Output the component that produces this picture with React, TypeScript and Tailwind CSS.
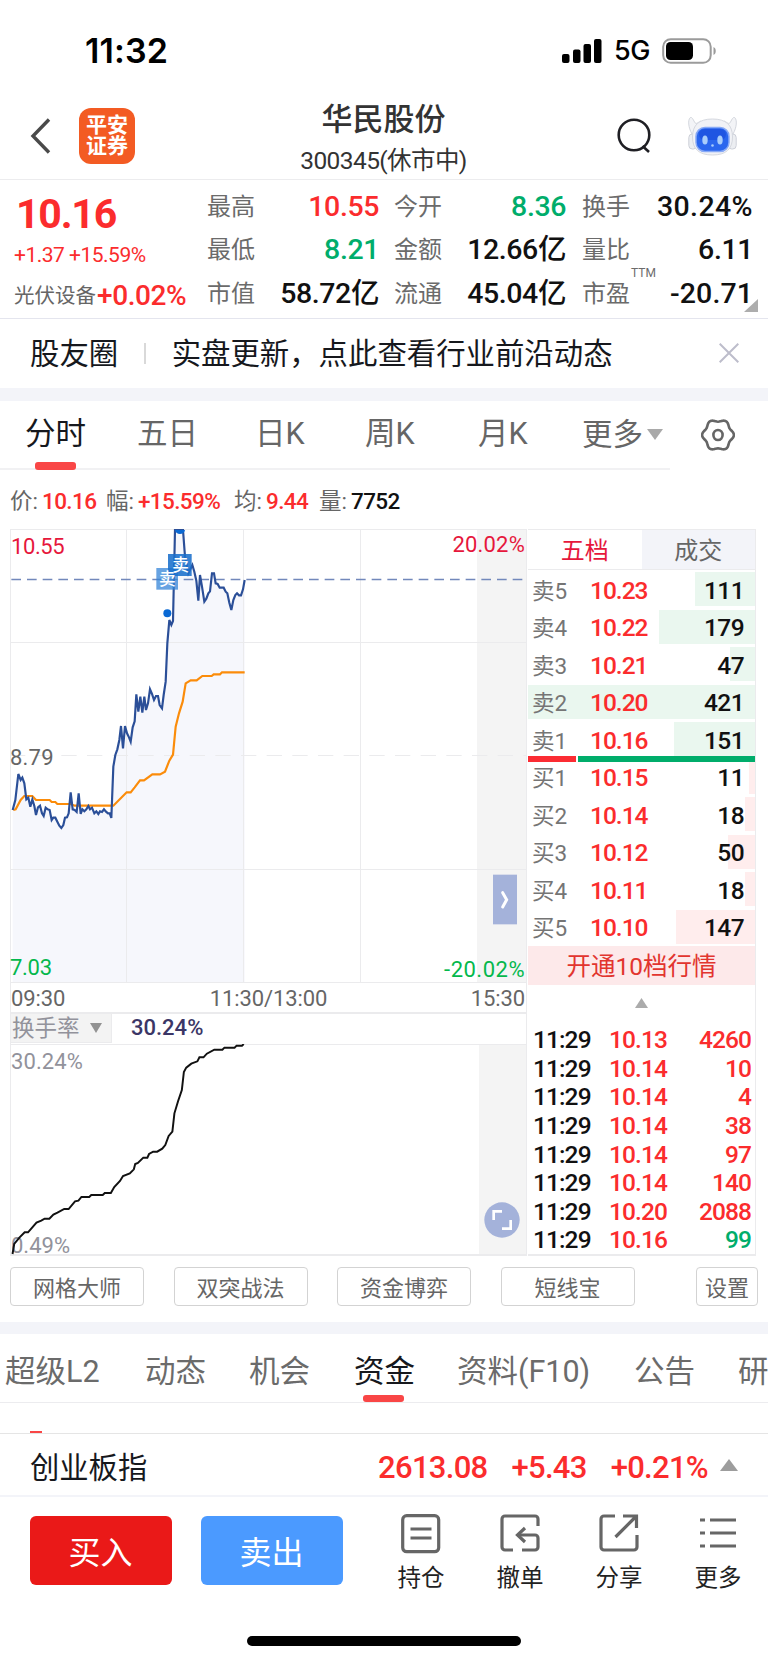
import React from 'react';
import clsx from 'clsx';

type Stat = { label: string; value: string; tone?: string; sup?: string; spacing?: string };
type Level = { label: string; price: string; volume: number };
type Tick = { time: string; price: string; volume: string; tone?: string };

const RED = 'text-[#fb2c2d]';
const GREEN = 'text-[#00ad6b]';

const STATS: Stat[][] = [
  [
    { label: '最高', value: '10.55', tone: RED },
    { label: '最低', value: '8.21', tone: GREEN },
    { label: '市值', value: '58.72亿' },
  ],
  [
    { label: '今开', value: '8.36', tone: GREEN },
    { label: '金额', value: '12.66亿' },
    { label: '流通', value: '45.04亿' },
  ],
  [
    { label: '换手', value: '30.24%', spacing: 'tracking-[0.4px]' },
    { label: '量比', value: '6.11' },
    { label: '市盈', value: '-20.71', sup: 'TTM', spacing: 'tracking-[0.1px]' },
  ],
];

const ASKS: Level[] = [
  { label: '卖5', price: '10.23', volume: 111 },
  { label: '卖4', price: '10.22', volume: 179 },
  { label: '卖3', price: '10.21', volume: 47 },
  { label: '卖2', price: '10.20', volume: 421 },
  { label: '卖1', price: '10.16', volume: 151 },
];

const BIDS: Level[] = [
  { label: '买1', price: '10.15', volume: 11 },
  { label: '买2', price: '10.14', volume: 18 },
  { label: '买3', price: '10.12', volume: 50 },
  { label: '买4', price: '10.11', volume: 18 },
  { label: '买5', price: '10.10', volume: 147 },
];

const MAX_VOLUME = 421;

const TICKS: Tick[] = [
  { time: '11:29', price: '10.13', volume: '4260' },
  { time: '11:29', price: '10.14', volume: '10' },
  { time: '11:29', price: '10.14', volume: '4' },
  { time: '11:29', price: '10.14', volume: '38' },
  { time: '11:29', price: '10.14', volume: '97' },
  { time: '11:29', price: '10.14', volume: '140' },
  { time: '11:29', price: '10.20', volume: '2088' },
  { time: '11:29', price: '10.16', volume: '99', tone: GREEN },
];

const PRICE_LINE =
  '38,870 46,840 55,762 62,780 67,773 73,790 79,838 85,833 91,860 97,838 103,858 108,885 114,862 120,857 126,880 131,888 137,863 143,868 149,870 155,900 160,893 166,893 172,905 178,917 184,924 190,915 195,893 201,892 206,880 212,817 218,868 224,870 230,876 236,820 242,882 247,868 253,874 259,868 265,858 270,868 276,863 283,880 289,874 295,882 300,874 306,876 312,868 318,875 324,880 329,880 334,894 340,740 346,705 352,688 358,660 363,618 369,685 375,618 381,640 387,652 392,665 398,622 404,604 409,523 415,575 421,530 427,578 433,530 438,570 444,550 450,508 456,522 462,540 468,528 474,528 479,555 486,565 491,525 497,485 502,370 508,300 514,315 519,303 525,30 549,30 555,110 565,160 577,135 583,155 589,182 595,242 600,165 606,200 613,245 619,236 625,220 630,214 636,160 642,160 647,190 653,192 659,203 671,203 677,215 682,220 688,248 694,270 700,240 706,225 711,220 717,226 723,226 729,208 734,180';

const AVERAGE_LINE =
  '40,870 47,868 62,840 73,828 97,828 108,840 149,840 155,846 166,846 172,852 212,852 224,857 340,857 380,817 392,817 404,802 420,781 432,781 457,763 480,763 495,755 508,722 519,704 527,620 537,580 548,545 557,490 572,481 590,481 607,468 635,468 641,463 660,463 666,457 734,457';

const TURNOVER_LINE =
  '37,672 42,642 58,622 73,607 83,607 108,578 122,572 132,566 146,566 158,554 170,548 190,537 203,537 222,514 232,512 241,501 264,501 270,495 304,495 310,489 328,489 338,471 355,453 364,438 384,430 396,418 400,402 408,399 424,383 436,383 441,372 453,365 465,365 480,356 489,345 499,318 510,305 516,250 527,213 538,180 544,126 551,113 566,101 584,94 590,82 602,82 612,71 634,59 658,59 664,53 694,53 700,47 716,47 721,42';

const GEAR = Array.from({ length: 72 }, (_, i) => {
  const a = (i * 5 * Math.PI) / 180;
  const r = 14.6 + 1.3 * Math.cos(6 * a);
  return `${(17 + r * Math.cos(a)).toFixed(2)},${(17 + r * Math.sin(a)).toFixed(2)}`;
}).join(' ');

export default function App() {
  return (
    <div className="flex h-[1663px] w-[768px] flex-col overflow-hidden bg-white font-['Roboto','Noto_Sans_CJK_SC',sans-serif] text-[#1a1a1a]">
      <StatusBar />
      <Header />
      <Quote />
      <Notice />
      <div className="h-[13px] shrink-0 bg-[#f3f4f9]" />
      <PeriodTabs />
      <ChartInfo />
      <div className="flex h-[727px] shrink-0 pl-[10px]">
        <div className="flex w-[517px] flex-col">
          <PriceChart />
          <TurnoverChart />
        </div>
        <OrderBook />
      </div>
      <Tools />
      <div className="h-[12px] shrink-0 bg-[#f3f4f9]" />
      <InfoTabs />
      <IndexBar />
      <TradeBar />
    </div>
  );
}

function StatusBar() {
  return (
    <div className="flex h-[96px] shrink-0 items-center justify-between pt-[6px] pr-[51px] pl-[85px] font-['Inter',sans-serif] text-black">
      <span className="text-[34px] leading-[40px] font-semibold tracking-[0.1px]">11:32</span>
      <div className="flex items-center">
        <svg width="40" height="25" viewBox="0 0 40 25">
          <rect x="0" y="15" width="7.5" height="9" rx="2" />
          <rect x="11" y="10.500" width="7.500" height="13.500" rx="2" />
          <rect x="21.500" y="5" width="7.500" height="19" rx="2" />
          <rect x="32" y="0" width="7.500" height="24" rx="2" />
        </svg>
        <span className="ml-[12px] w-[37px] text-[27px] leading-[30px] font-medium tracking-[-0.5px]">5G</span>
        <svg className="ml-[11px]" width="55" height="26" viewBox="0 0 55 26">
          <rect x="1.200" y="1.200" width="47.500" height="23.600" rx="7.500" fill="none" stroke="#9b9b9b" strokeWidth="2" />
          <rect x="4" y="4" width="27" height="18" rx="4.500" />
          <path d="M51.500 9v8c3-1.200 3-6.800 0-8z" fill="#9b9b9b" />
        </svg>
      </div>
    </div>
  );
}

function Header() {
  return (
    <header className="flex h-[84px] shrink-0 items-center border-b border-[#ececee] pr-[31px] pl-[30px]">
      <svg className="-mt-[4px]" width="21" height="36" viewBox="0 0 21 36" fill="none" stroke="#4a4a4a" strokeWidth="3.400">
        <path d="M19 1.500L3 18l16 16.500" />
      </svg>
      <div className="-mt-[4px] ml-[28px] flex h-[56px] w-[56px] flex-col items-center justify-center rounded-[12px] bg-[#f35b23] text-[21px] leading-[21px] font-bold text-white">
        <span>平安</span>
        <span>证券</span>
      </div>
      <div className="flex flex-1 flex-col items-center pt-[5px] pl-[15px] text-[#333]">
        <h1 className="text-[31px] leading-[38px] font-medium">华民股份</h1>
        <span className="mt-[3px] text-[24.500px] leading-[38px] tracking-[-0.6px]">300345(休市中)</span>
      </div>
      <svg className="-mt-[3px]" width="34" height="36" viewBox="0 0 34 36" fill="none" stroke="#1f1f24" strokeWidth="2.600">
        <circle cx="17" cy="17" r="15.300" />
        <path d="M25.500 28l6.500 6" />
      </svg>
      <Robot />
    </header>
  );
}

function Robot() {
  return (
    <svg className="-mt-[3px] ml-[37px]" width="49" height="39" viewBox="0 0 49 39">
      <path d="M4 17C0 10 0 3 2 .8c2-1.300 3 1.500 4.500 4.200C8 8 9.500 5.500 13 4l-4 12z" fill="#f3f4f7" stroke="#d3d6dd" strokeWidth="1" />
      <path d="M45 17c4-7 4-14 2-16.200-2-1.300-3 1.500-4.500 4.200C41 8 39.500 5.500 36 4l4 12z" fill="#f3f4f7" stroke="#d3d6dd" strokeWidth="1" />
      <rect x=".8" y="17" width="8" height="15" rx="3.500" fill="#eceef2" stroke="#cdd0d8" />
      <rect x="40.200" y="17" width="8" height="15" rx="3.500" fill="#eceef2" stroke="#cdd0d8" />
      <path d="M24.500 2C11 2 4.500 8 4.500 20S11 38 24.500 38s20-6 20-18-6.500-18-20-18z" fill="#f1f2f6" stroke="#d5d8df" />
      <rect x="8" y="10.500" width="33" height="24" rx="9" fill="#2a66ee" stroke="#87a9f6" strokeWidth="1.500" />
      <rect x="11" y="12" width="27" height="11" rx="6" fill="#1547d8" opacity=".55" />
      <ellipse cx="17" cy="23" rx="2.700" ry="4.500" fill="#a9cdfb" />
      <ellipse cx="32" cy="23" rx="2.700" ry="4.500" fill="#a9cdfb" />
      <circle cx="24.500" cy="28.500" r="1.300" fill="#a9cdfb" />
    </svg>
  );
}

function Quote() {
  return (
    <section className="relative flex h-[139px] shrink-0 border-b border-[#e4e5ee] pt-[14px] pl-[14px]">
      <div className="flex w-[193px] flex-col">
        <span className={clsx('ml-[2px] text-[41px] leading-[40px] font-bold tracking-[-1.2px]', RED)}>10.16</span>
        <span className={clsx('mt-[9px] text-[21px] leading-[24px] tracking-[-0.5px] whitespace-nowrap', RED)}>+1.37 +15.59%</span>
        <span className="mt-[14px] flex items-center leading-[30px] whitespace-nowrap">
          <span className="text-[20.500px] text-[#666]">光伏设备</span>
          <span className={clsx('ml-px text-[28px] font-medium tracking-[-0.4px]', RED)}>+0.02%</span>
        </span>
      </div>
      {STATS.map((column, i) => (
        <div key={i} className={clsx('-mt-[9px] flex flex-col', i < 2 ? 'mr-[16px] w-[172px]' : 'w-[171px]', i === 1 && '-ml-px')}>
          {column.map((s) => (
            <div key={s.label} className="flex h-[43.500px] shrink-0 items-center justify-between leading-[30px]">
              <span className="relative text-[24px] text-[#6b6b6b]">
                {s.label}
                {s.sup && <sup className="absolute -top-[13px] left-[49px] text-[12px] leading-[14px]">{s.sup}</sup>}
              </span>
              <span className={clsx('text-[28.500px] font-medium', s.spacing ?? 'tracking-[-0.4px]', s.tone ?? 'text-[#111]')}>{s.value}</span>
            </div>
          ))}
        </div>
      ))}
      <svg className="absolute top-[119px] left-[744px]" width="14" height="13" viewBox="0 0 14 13">
        <path d="M14 0v13H0z" fill="#adadad" />
      </svg>
    </section>
  );
}

function Notice() {
  return (
    <section className="flex h-[69px] shrink-0 items-center pr-[29px] pl-[30px] text-[29.400px] leading-[40px] text-[#16181d]">
      <span>股友圈</span>
      <span className="ml-[26px] h-[21px] w-[1.500px] bg-[#d9d9d9]" />
      <span className="ml-[26px] flex-1 whitespace-nowrap">实盘更新，点此查看行业前沿动态</span>
      <svg className="-mt-[2px]" width="20" height="20" viewBox="0 0 20 20" stroke="#bdbdcb" strokeWidth="2">
        <path d="M.7.7l18.600 18.600M19.300.7L.7 19.300" />
      </svg>
    </section>
  );
}

function PeriodTabs() {
  return (
    <nav className="flex h-[69px] shrink-0 text-[30.500px] leading-[66px] text-[#666]">
      <div className="flex w-[670px] border-b-2 border-[#f1f1f3] pl-[25px] whitespace-nowrap">
        <span className="relative w-[112px] text-[#16181d]">
          分时
          <i className="absolute top-[61px] left-[10px] h-[8px] w-[41px] rounded-[3px] bg-[#f94646]" />
        </span>
        <span className="w-[118px]">五日</span>
        <span className="w-[110px]">日K</span>
        <span className="w-[113px]">周K</span>
        <span className="w-[104px]">月K</span>
        <span className="flex items-center">
          更多
          <svg className="ml-[4px]" width="16" height="11" viewBox="0 0 16 11">
            <path d="M0 0h16L8 11z" fill="#a9a9a9" />
          </svg>
        </span>
      </div>
      <svg className="mt-[17px] ml-[31px]" width="34" height="34" viewBox="0 0 34 34" fill="none" stroke="#666" strokeWidth="2.600" strokeLinejoin="round">
        <polygon points={GEAR} />
        <ellipse cx="17" cy="17" rx="4.600" ry="5" />
      </svg>
    </nav>
  );
}

function ChartInfo() {
  const items = [
    { label: '价:', value: '10.16', tone: RED, width: 'w-[96px]' },
    { label: '幅:', value: '+15.59%', tone: RED, width: 'w-[128px]' },
    { label: '均:', value: '9.44', tone: RED, width: 'w-[85px]' },
    { label: '量:', value: '7752', tone: 'text-[#111]', width: 'w-[90px]' },
  ];
  return (
    <div className="flex h-[59px] shrink-0 pt-[3px] pl-[10px] text-[22.500px] leading-[56px] whitespace-nowrap">
      {items.map((it) => (
        <span key={it.label} className={it.width}>
          <span className="mr-[4px] text-[#666]">{it.label}</span>
          <span className={clsx('font-medium tracking-[-0.6px]', it.tone)}>{it.value}</span>
        </span>
      ))}
    </div>
  );
}

// Drawn in 3x units, 1551 x 1362 on a 517 x 454 box
function PriceChart() {
  return (
    <div className="relative h-[454px] shrink-0">
      <svg width="517" height="454" viewBox="30 27 1551 1362">
        <rect x="1431" y="27" width="147" height="1362" fill="#f4f4f4" />
        <polygon points={`38,1387 ${PRICE_LINE} 734,1387`} fill="#f6f7fc" />
        <g stroke="#ebebed" strokeWidth="3">
          <path d="M30 28.500H1578M30 367.500H1578M30 1048.500H1578M30 1387.500H1578" />
          <path d="M31.500 27V1389M379.500 27V1389M730.500 27V1389M1081.500 27V1389M1579.500 27V1389" />
          <path d="M30 706.500H1578" strokeDasharray="46 31" />
        </g>
        <path d="M34 178.500H1578" stroke="#7288bb" strokeWidth="5" strokeDasharray="29 18" />
        <polyline points={AVERAGE_LINE} fill="none" stroke="#fb8c0a" strokeWidth="6.500" />
        <polyline points={PRICE_LINE} fill="none" stroke="#2b4f98" strokeWidth="6.500" />
        <path d="M525 30h30c-2 16-28 16-30 0z" fill="#0a69d4" />
        <circle cx="502" cy="280" r="12" fill="#0a69d4" />
        <rect x="469" y="144" width="65" height="65" fill="#3484d8" opacity=".75" />
        <rect x="504" y="102" width="71" height="66" fill="#1a70cc" opacity=".88" />
        <g fill="#fff" fontSize="50" fontWeight="500">
          <text x="477" y="195">卖</text>
          <text x="517" y="153">卖</text>
        </g>
        <rect x="1479" y="1064" width="72" height="149" fill="#a4b2da" />
        <path d="M1508 1118l12 21-12 22" fill="none" stroke="#fff" strokeWidth="9" strokeLinecap="round" />
      </svg>
      <div className="absolute inset-0 text-[22px] leading-[24px] tracking-[0.2px] text-[#666]">
        <span className="absolute top-[6px] left-px tracking-[-0.4px] text-[#e6173c]">10.55</span>
        <span className="absolute top-[4px] right-[2px] text-[#e6173c]">20.02%</span>
        <span className="absolute top-[217px] left-0">8.79</span>
        <span className="absolute bottom-[3px] left-0 tracking-[-0.3px] text-[#04b84c]">7.03</span>
        <span className="absolute right-[2px] bottom-px tracking-[0.5px] text-[#04b84c]">-20.02%</span>
      </div>
    </div>
  );
}

function TurnoverChart() {
  return (
    <div className="flex flex-1 flex-col border-l border-[#ebebed] text-[22px]">
      <div className="relative flex h-[29px] items-center justify-between border-r border-[#ebebed] pt-[2px] pr-px leading-[24px] tracking-[-0.1px] text-[#666]">
        <span>09:30</span>
        <span className="absolute inset-x-0 text-center">11:30/13:00</span>
        <span>15:30</span>
      </div>
      <div className="flex h-[32px] items-start border-t-2 border-r border-[#ebebed] leading-[28px]">
        <span className="flex h-[29px] w-[101px] items-center border-r border-b border-[#ebebed] bg-[#f3f3f3] pl-px text-[22.500px] text-[#92929b]">
          换手率
          <svg className="ml-[10px]" width="12" height="10" viewBox="0 0 11 9">
            <path d="M0 0h11L5.500 9z" fill="#929292" />
          </svg>
        </span>
        <span className="ml-[19px] font-medium text-[#3b3666]">30.24%</span>
      </div>
      <div className="relative h-[212px]">
        <svg width="516" height="212" viewBox="33 42 1548 636">
          <rect x="1437" y="43" width="144" height="636" fill="#f4f4f4" />
          <path d="M30 43.500H1581M1579.500 43V678" stroke="#ebebed" strokeWidth="3" />
          <path d="M30 675H1581" stroke="#ebebed" strokeWidth="6" />
          <circle cx="1506" cy="570" r="53" fill="#a4b2da" />
          <path d="M1481 570v-26h25M1532 570v26h-26" fill="none" stroke="#fff" strokeWidth="8" />
        </svg>
        <div className="absolute inset-0 leading-[24px] text-[#92929b]">
          <span className="absolute top-[6px] left-0 tracking-[0.1px]">30.24%</span>
          <span className="absolute top-[190px] left-0">0.49%</span>
        </div>
        <svg className="absolute inset-0" width="516" height="212" viewBox="33 42 1548 636">
          <polyline points={TURNOVER_LINE} transform="scale(1.014 1)" fill="none" stroke="#111" strokeWidth="5.800" />
        </svg>
      </div>
    </div>
  );
}

function LevelRow({ level, bar }: { level: Level; bar: string }) {
  return (
    <div className="relative flex h-[37.500px] shrink-0 items-center pt-[4px] pr-[11px] pl-[4px] text-[24.500px]">
      <i className={clsx('absolute top-[2px] right-0 h-[34px]', bar)} style={{ width: `${(level.volume / MAX_VOLUME) * 100}%` }} />
      <span className="relative w-[58px] text-[22.500px] text-[#757575]">{level.label}</span>
      <span className={clsx('relative font-medium tracking-[-1px]', RED)}>{level.price}</span>
      <span className="relative ml-auto font-medium tracking-[-0.6px] text-[#111]">{level.volume}</span>
    </div>
  );
}

function OrderBook() {
  return (
    <div className="ml-px flex h-[727px] w-[228px] flex-col border-t border-r border-b-2 border-[#ebebed] leading-[30px]">
      <div className="flex h-[40px] shrink-0 border-b border-[#ebebed] text-center text-[24px] leading-[43px]">
        <span className="flex-1 text-[#e6173c]">五档</span>
        <span className="flex-1 bg-[#f3f4f9] text-[#666]">成交</span>
      </div>
      {ASKS.map((level) => (
        <LevelRow key={level.label} level={level} bar="bg-[#eaf7ef]" />
      ))}
      <div className="relative z-10 -mt-[2px] -mb-[4px] flex h-[6px] shrink-0 gap-[2px]">
        <i className="w-[48px] bg-[#fb2c33]" />
        <i className="flex-1 bg-[#00ad6b]" />
      </div>
      {BIDS.map((level) => (
        <LevelRow key={level.label} level={level} bar="bg-[#ffeded]" />
      ))}
      <div className="mt-px flex h-[39px] shrink-0 items-center justify-center bg-[#fde9ea] pt-[3px] text-[24.500px] text-[#e2352f]">开通10档行情</div>
      <div className="flex h-[40px] shrink-0 justify-center pt-[13px]">
        <svg width="13" height="10" viewBox="0 0 13 10">
          <path d="M0 10h13L6.500 0z" fill="#ababab" />
        </svg>
      </div>
      {TICKS.map((t, i) => (
        <div key={i} className="flex h-[28.600px] shrink-0 items-center pt-[2px] pr-[4px] pl-[5px] text-[24.500px] leading-[26px] font-medium tracking-[-0.9px]">
          <span className="w-[76px] text-[#111]">{t.time}</span>
          <span className={RED}>{t.price}</span>
          <span className={clsx('ml-auto', t.tone ?? RED)}>{t.volume}</span>
        </div>
      ))}
    </div>
  );
}

function Tools() {
  return (
    <div className="flex h-[66px] shrink-0 items-start pt-[11px] pr-[10px] pl-[10px] text-[22px] leading-[41px] text-[#666]">
      {['网格大师', '双突战法', '资金博弈', '短线宝'].map((t) => (
        <button key={t} className="mr-[29.500px] h-[39px] w-[134px] rounded-[4px] border border-[#d3d3d3]">
          {t}
        </button>
      ))}
      <button className="ml-auto h-[39px] w-[62px] rounded-[4px] border border-[#d3d3d3]">设置</button>
    </div>
  );
}

function InfoTabs() {
  return (
    <>
      <nav className="flex h-[69px] shrink-0 overflow-hidden border-b border-[#ececef] pl-[5px] text-[30.500px] leading-[76px] whitespace-nowrap text-[#6b6b6b]">
        <span className="w-[140px] shrink-0">超级L2</span>
        <span className="w-[104px] shrink-0">动态</span>
        <span className="w-[105px] shrink-0">机会</span>
        <span className="relative w-[103px] shrink-0 text-[#16181d]">
          资金
          <i className="absolute top-[61px] left-[9px] h-[7px] w-[41px] rounded-[3px] bg-[#f94646]" />
        </span>
        <span className="w-[177px] shrink-0">资料(F10)</span>
        <span className="w-[104px] shrink-0">公告</span>
        <span className="shrink-0">研</span>
      </nav>
      <div className="flex h-[31px] shrink-0 items-end border-b border-[#e5e5e5] pl-[30px]">
        <i className="h-[2px] w-[12px] bg-[#f94646]" />
      </div>
    </>
  );
}

function IndexBar() {
  return (
    <div className="flex h-[63px] shrink-0 items-center border-b-2 border-[#f3f4f9] pt-[6px] pr-[30px] pl-[30px] leading-[40px]">
      <span className="text-[29.300px] text-[#16181d]">创业板指</span>
      <div className={clsx('ml-auto flex items-center text-[31px] font-medium tracking-[-0.7px]', RED)}>
        <span>2613.08</span>
        <span className="ml-[24px]">+5.43</span>
        <span className="ml-[24px]">+0.21%</span>
      </div>
      <svg className="-mt-[6px] ml-[12px]" width="18" height="12" viewBox="0 0 18 12">
        <path d="M0 12h18L9 0z" fill="#9d9d9d" />
      </svg>
    </div>
  );
}

function TradeBar() {
  const actions = [
    {
      label: '持仓',
      icon: (
        <>
          <rect x="1.700" y="1.700" width="36" height="36" rx="4" />
          <path d="M9.500 15h21M9.500 24h21" />
        </>
      ),
    },
    {
      label: '撤单',
      icon: (
        <>
          <path d="M38 12V5a3 3 0 0 0-3-3H5a3 3 0 0 0-3 3v28a3 3 0 0 0 3 3h8" />
          <path d="M22 36h13a3 3 0 0 0 3-3V24a3 3 0 0 0-3-3H18" />
          <path d="M25 14l-7.500 7 7.500 7" />
        </>
      ),
    },
    {
      label: '分享',
      icon: (
        <>
          <path d="M16 2H5a3 3 0 0 0-3 3v28a3 3 0 0 0 3 3h30a3 3 0 0 0 3-3V21" />
          <path d="M24 2h13.500v12M37 2.500L16.500 23" />
        </>
      ),
    },
    {
      label: '更多',
      icon: (
        <>
          <path d="M12 6h26M12 19h26M12 32h26" />
          <path d="M2 6h5M2 19h5M2 32h5" />
        </>
      ),
    },
  ];
  return (
    <footer className="flex min-h-0 flex-1 flex-col">
      <div className="flex pt-[19px] pl-[29.500px]">
        <button className="h-[69px] w-[142px] rounded-[6px] bg-[#ea1918] text-[32px] leading-[74px] text-white">买入</button>
        <button className="ml-[29px] h-[69px] w-[142px] rounded-[6px] bg-[#4b9aff] text-[32px] leading-[74px] text-white">卖出</button>
        <div className="ml-[29px] flex">
          {actions.map((a) => (
            <div key={a.label} className="flex w-[99px] flex-col items-center text-[23.500px] leading-[28px] text-[#222]">
              <svg className="-mt-[2px]" width="40" height="40" viewBox="0 0 40 40" fill="none" stroke="#666" strokeWidth="3.200">
                {a.icon}
              </svg>
              <span className="mt-[10px]">{a.label}</span>
            </div>
          ))}
        </div>
      </div>
      <div className="mt-auto mb-[17px] h-[10px] w-[274px] self-center rounded-full bg-black" />
    </footer>
  );
}
